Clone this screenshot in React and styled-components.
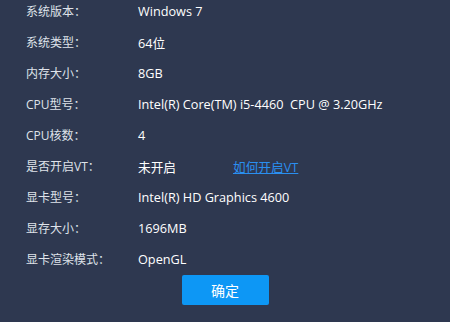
import React from "react";
import styled, { createGlobalStyle } from "styled-components";

const GlobalStyle = createGlobalStyle`
    html, body {
        margin: 0;
        padding: 0;
        background: #2e3850;
    }
    body {
        font-family: "Open Sans", "Noto Sans CJK SC", sans-serif;
    }
`;

const rows = [
    { label: "系统版本：", value: "Windows 7" },
    { label: "系统类型：", value: "64位" },
    { label: "内存大小：", value: "8GB" },
    { label: "CPU型号：", value: "Intel(R) Core(TM) i5-4460  CPU @ 3.20GHz" },
    { label: "CPU核数：", value: "4" },
    { label: "是否开启VT：", value: "未开启", link: "如何开启VT" },
    { label: "显卡型号：", value: "Intel(R) HD Graphics 4600" },
    { label: "显存大小：", value: "1696MB" },
    { label: "显卡渲染模式：", value: "OpenGL" },
];

function App() {
    return (
        <>
            <GlobalStyle />
            <Panel>
                <InfoList>
                    {rows.map((item) => (
                        <Row key={item.label}>
                            <Label>{item.label}</Label>
                            <Value>{item.value}</Value>
                            {item.link && <HelpLink href="#">{item.link}</HelpLink>}
                        </Row>
                    ))}
                </InfoList>
                <Footer>
                    <ConfirmButton>确定</ConfirmButton>
                </Footer>
            </Panel>
        </>
    );
}

const Panel = styled.div`
    width: 450px;
    height: 322px;
    background: #2e3850;
    overflow: hidden;
`;
const InfoList = styled.div`
    display: flex;
    flex-direction: column;
    gap: 9px;
    padding-left: 26px;
`;
const Row = styled.div`
    display: flex;
    align-items: center;
    height: 22px;
`;
const Label = styled.span`
    width: 112px;
    font-size: 12px;
    color: #dfe3ea;
`;
const Value = styled.span`
    width: 95px;
    font-size: 12.7px;
    color: #ffffff;
    white-space: pre;
`;
const HelpLink = styled.a`
    font-size: 12.7px;
    color: #2a8ff0;
    text-decoration: underline;
`;
const Footer = styled.div`
    display: flex;
    justify-content: center;
    padding-top: 5px;
`;
const ConfirmButton = styled.button`
    width: 87px;
    height: 30px;
    border: none;
    border-radius: 2px;
    background: #0d97f5;
    color: #ffffff;
    font-family: "Noto Sans CJK SC", sans-serif;
    font-size: 14px;
    cursor: pointer;
`;

export default App;
